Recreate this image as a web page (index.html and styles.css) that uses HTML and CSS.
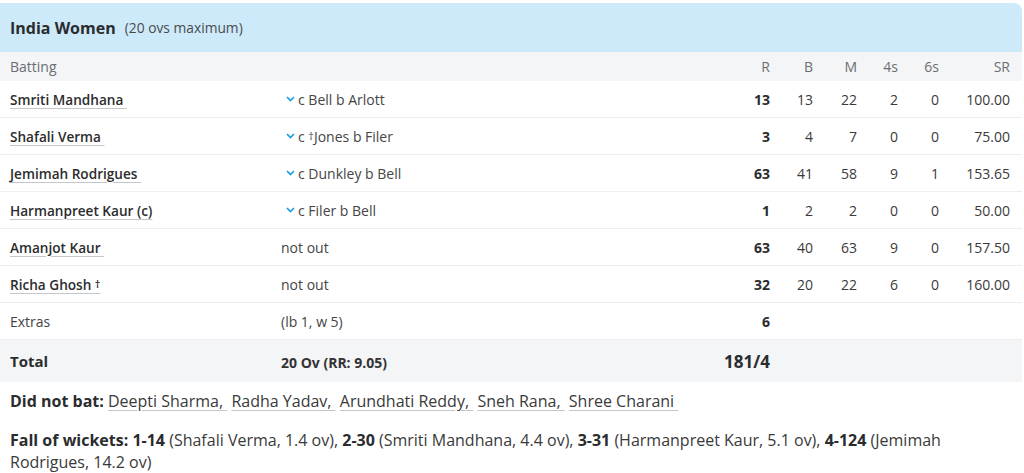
FILE: index.html
```html
<!DOCTYPE html>
<html>
<head>
<meta charset="utf-8">
<link rel="stylesheet" href="styles.css">
</head>
<body>
<div class="card">
  <div class="head"><span class="team">India Women</span><span class="ovs">(20 ovs maximum)</span></div>
  <div class="row hdr">
    <div>Batting</div><div></div><div class="n">R</div><div class="n">B</div><div class="n">M</div><div class="n">4s</div><div class="n">6s</div><div class="n">SR</div>
  </div>
  <div class="row">
    <div><a class="name">Smriti Mandhana&nbsp;</a></div>
    <div class="dis"><svg class="chev" viewBox="0 0 9 6"><polyline points="1,1 4.5,4.5 8,1"/></svg><span>c Bell b Arlott</span></div>
    <div class="n b">13</div><div class="n">13</div><div class="n">22</div><div class="n">2</div><div class="n">0</div><div class="n">100.00</div>
  </div>
  <div class="row">
    <div><a class="name">Shafali Verma&nbsp;</a></div>
    <div class="dis"><svg class="chev" viewBox="0 0 9 6"><polyline points="1,1 4.5,4.5 8,1"/></svg><span>c <span class="dag">†</span>Jones b Filer</span></div>
    <div class="n b">3</div><div class="n">4</div><div class="n">7</div><div class="n">0</div><div class="n">0</div><div class="n">75.00</div>
  </div>
  <div class="row">
    <div><a class="name">Jemimah Rodrigues&nbsp;</a></div>
    <div class="dis"><svg class="chev" viewBox="0 0 9 6"><polyline points="1,1 4.5,4.5 8,1"/></svg><span>c Dunkley b Bell</span></div>
    <div class="n b">63</div><div class="n">41</div><div class="n">58</div><div class="n">9</div><div class="n">1</div><div class="n">153.65</div>
  </div>
  <div class="row">
    <div><a class="name">Harmanpreet Kaur (c)</a></div>
    <div class="dis"><svg class="chev" viewBox="0 0 9 6"><polyline points="1,1 4.5,4.5 8,1"/></svg><span>c Filer b Bell</span></div>
    <div class="n b">1</div><div class="n">2</div><div class="n">2</div><div class="n">0</div><div class="n">0</div><div class="n">50.00</div>
  </div>
  <div class="row">
    <div><a class="name">Amanjot Kaur&nbsp;</a></div>
    <div class="dis"><span>not out</span></div>
    <div class="n b">63</div><div class="n">40</div><div class="n">63</div><div class="n">9</div><div class="n">0</div><div class="n">157.50</div>
  </div>
  <div class="row">
    <div><a class="name">Richa Ghosh <span class="dag">†</span></a></div>
    <div class="dis"><span>not out</span></div>
    <div class="n b">32</div><div class="n">20</div><div class="n">22</div><div class="n">6</div><div class="n">0</div><div class="n">160.00</div>
  </div>
  <div class="row extras">
    <div>Extras</div>
    <div class="dis"><span>(lb 1, w 5)</span></div>
    <div class="n b">6</div><div></div><div></div><div></div><div></div><div></div>
  </div>
  <div class="row total">
    <div class="tl">Total</div>
    <div class="rr">20 Ov (RR: 9.05)</div>
    <div class="n tot">181/4</div><div></div><div></div><div></div><div></div><div></div>
  </div>
  <p class="dnb"><b>Did not bat:</b> <a class="u">Deepti Sharma,&nbsp;</a> <a class="u">Radha Yadav,&nbsp;</a> <a class="u">Arundhati Reddy,&nbsp;</a> <a class="u">Sneh Rana,&nbsp;</a> <a class="u">Shree Charani&nbsp;</a></p>
  <p class="fow"><b>Fall of wickets:</b> <b>1-14</b> <span>(Shafali Verma, 1.4 ov),</span> <b>2-30</b> <span>(Smriti Mandhana, 4.4 ov),</span> <b>3-31</b> <span>(Harmanpreet Kaur, 5.1 ov),</span> <b>4-124</b> <span>(Jemimah</span> <span>Rodrigues, 14.2 ov)</span></p>
</div>
</body>
</html>
```
FILE: styles.css
```css
* { box-sizing: border-box; }
html, body { margin: 0; padding: 0; background: #fff; }
body {
  font-family: "Open Sans", "Noto Sans", sans-serif;
  color: #2b2c2d;
  padding-top: 3px;
}
.card { width: 1022px; }
.head {
  height: 49px;
  background: #cdeafb;
  border-top-right-radius: 8px;
  display: flex;
  align-items: center;
  padding-left: 10px;
}
.team { font-size: 16px; font-weight: 700; color: #2b2c2d; }
.ovs { font-size: 13.8px; color: #4a4a4a; margin-left: 9px; }
.row {
  display: grid;
  grid-template-columns: 271px 1fr 60px 43px 44px 41px 41px 71px;
  padding: 0 12px 0 10px;
  height: 37px;
  align-items: center;
  border-bottom: 1px solid #eceef1;
  font-size: 14px;
  color: #3a3a3a;
}
.row.hdr {
  height: 29px;
  background: #f4f5f7;
  color: #6b6e72;
  border-bottom: none;
}
.n { text-align: right; }
.b { font-weight: 700; color: #2b2c2d; }
.name {
  font-size: 13.6px;
  font-weight: 600;
  color: #2b2c2d;
  text-decoration: underline;
  text-decoration-color: #c3c6cb;
  text-underline-offset: 3px;
}
.dis { display: flex; align-items: center; color: #454545; }
.chev {
  flex: none;
  width: 9px; height: 6px;
  margin: 0 3px 1px 5px;
  fill: none; stroke: #1a9fe0; stroke-width: 1.7;
}
.dag { font-size: 11px; vertical-align: 2px; }
.extras { color: #444; }
.total {
  height: 42px;
  background: #f4f5f7;
  border-bottom: none;
}
.tl { font-size: 15px; font-weight: 700; color: #2b2c2d; }
.rr { font-size: 14px; font-weight: 700; color: #333; padding-top: 2px; }
.tot { font-size: 17px; font-weight: 700; color: #2b2c2d; }
.dnb, .fow {
  margin: 0;
  padding: 0 10px;
  font-size: 16px;
  line-height: 20px;
  color: #3a3a3a;
}
.dnb { margin-top: 9px; }
.fow { margin-top: 18px; line-height: 22px; }
.dnb b, .fow b { color: #2b2c2d; }
.u {
  text-decoration: underline;
  text-decoration-color: #c3c6cb;
  text-underline-offset: 3px;
}
```
